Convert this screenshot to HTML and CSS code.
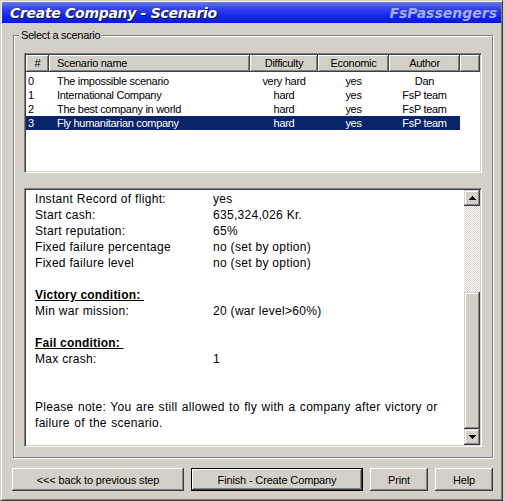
FILE: index.html
```html
<!DOCTYPE html>
<html>
<head>
<meta charset="utf-8">
<link rel="stylesheet" href="styles.css">
</head>
<body>
<div class="window">
  <div class="titlebar">
    <span class="title">Create Company - Scenario</span>
    <span class="brand">FsPassengers</span>
  </div>
  <div class="group">
    <span class="group-label">Select a scenario</span>
    <div class="list">
      <div class="list-header">
        <div class="hcell center">#</div>
        <div class="hcell name">Scenario name</div>
        <div class="hcell center">Difficulty</div>
        <div class="hcell center">Economic</div>
        <div class="hcell center">Author</div>
        <div class="hcell"></div>
      </div>
      <div class="rows">
        <div class="row"><span class="num">0</span><span class="name">The impossible scenario</span><span class="center">very hard</span><span class="center">yes</span><span class="center">Dan</span></div>
        <div class="row"><span class="num">1</span><span class="name">International Company</span><span class="center">hard</span><span class="center">yes</span><span class="center">FsP team</span></div>
        <div class="row"><span class="num">2</span><span class="name">The best company in world</span><span class="center">hard</span><span class="center">yes</span><span class="center">FsP team</span></div>
        <div class="row selected"><span class="num">3</span><span class="name">Fly humanitarian company</span><span class="center">hard</span><span class="center">yes</span><span class="center">FsP team</span></div>
      </div>
    </div>
    <div class="details">
      <div class="details-text">
        <div class="line"><span class="key">Instant Record of flight:</span><span>yes</span></div>
        <div class="line"><span class="key">Start cash:</span><span>635,324,026 Kr.</span></div>
        <div class="line"><span class="key">Start reputation:</span><span>65%</span></div>
        <div class="line"><span class="key">Fixed failure percentage</span><span>no (set by option)</span></div>
        <div class="line"><span class="key">Fixed failure level</span><span>no (set by option)</span></div>
        <div class="line"></div>
        <div class="line"><span class="heading">Victory condition:&nbsp;</span></div>
        <div class="line"><span class="key">Min war mission:</span><span>20 (war level&gt;60%)</span></div>
        <div class="line"></div>
        <div class="line"><span class="heading">Fail condition:&nbsp;</span></div>
        <div class="line"><span class="key">Max crash:</span><span>1</span></div>
        <div class="line"></div>
        <div class="line"></div>
        <div class="line note">Please note: You are still allowed to fly with a company after victory or</div>
        <div class="line note">failure of the scenario.</div>
      </div>
      <div class="scrollbar">
        <div class="sb-btn"><svg width="7" height="4" viewBox="0 0 7 4"><path d="M3 0h1v1h-1z M2 1h3v1h-3z M1 2h5v1h-5z M0 3h7v1h-7z" fill="#000"/></svg></div>
        <div class="sb-track"></div>
        <div class="sb-thumb"></div>
        <div class="sb-btn"><svg width="7" height="4" viewBox="0 0 7 4"><path d="M0 0h7v1h-7z M1 1h5v1h-5z M2 2h3v1h-3z M3 3h1v1h-1z" fill="#000"/></svg></div>
      </div>
    </div>
  </div>
  <div class="buttons">
    <div class="btn wide">&lt;&lt;&lt; back to previous step</div>
    <div class="btn wide default">Finish - Create Company</div>
    <div class="btn small">Print</div>
    <div class="btn small">Help</div>
  </div>
</div>
</body>
</html>
```
FILE: styles.css
```css
html, body {
  margin: 0;
  padding: 0;
  background: #d4d0c8;
}
body {
  width: 505px;
  height: 501px;
  overflow: hidden;
  font-family: "Liberation Sans", Arial, sans-serif;
  color: #000;
}
.window {
  width: 503px;
  height: 501px;
  box-sizing: border-box;
  border: 1px solid;
  border-color: #d4d0c8 #404040 #404040 #d4d0c8;
  box-shadow: inset 1px 1px 0 #fff, inset -1px -1px 0 #808080;
  padding: 1px;
  background: #d4d0c8;
}
.titlebar {
  height: 21px;
  display: flex;
  align-items: center;
  justify-content: space-between;
  padding: 0 4px 0 8px;
  background: linear-gradient(180deg, #6c78e4 0%, #3040ee 35%, #1024ec 70%, #0818e0 100%);
  font-family: "DejaVu Sans", Verdana, sans-serif;
  font-weight: bold;
  font-style: italic;
}
.title {
  font-size: 14px;
  letter-spacing: -0.3px;
  color: #fff;
  text-shadow: 1px 1px 0 #101040;
}
.brand {
  font-size: 14px;
  color: #a4acec;
}
.group {
  position: relative;
  margin: 12px 0 0 11px;
  width: 480px;
  height: 423px;
  box-sizing: border-box;
  border: 1px solid #808080;
  box-shadow: inset 1px 1px 0 #fff, 1px 1px 0 #fff;
  padding: 17px 10px 10px 10px;
  display: flex;
  flex-direction: column;
  gap: 15px;
}
.group-label {
  position: absolute;
  top: -8px;
  left: 5px;
  padding: 0 2px;
  background: #d4d0c8;
  font-size: 11px;
  line-height: 14px;
  letter-spacing: -0.3px;
}
.list, .details {
  box-sizing: border-box;
  border: 1px solid;
  border-color: #808080 #fff #fff #808080;
  box-shadow: inset 1px 1px 0 #404040, inset -1px -1px 0 #d4d0c8;
  padding: 1px;
  background: #fff;
}
.list {
  height: 120px;
  font-size: 11px;
  letter-spacing: -0.3px;
}
.list-header {
  display: grid;
  grid-template-columns: 23px 201px 68px 71px 71px 20px;
  height: 17px;
}
.hcell {
  background: #d4d0c8;
  box-shadow: inset -1px -1px 0 #404040, inset 1px 1px 0 #fff, inset -2px -2px 0 #808080;
  line-height: 17px;
  white-space: nowrap;
}
.hcell.name {
  padding-left: 8px;
}
.center {
  text-align: center;
}
.rows {
  padding-top: 2px;
}
.row {
  display: grid;
  grid-template-columns: 23px 201px 68px 71px 71px;
  width: 434px;
  height: 14px;
  line-height: 14px;
  white-space: nowrap;
}
.row .num {
  padding-left: 2px;
}
.row .name {
  padding-left: 8px;
}
.row.selected {
  background: #0a246a;
  color: #fff;
}
.details {
  height: 259px;
  display: flex;
}
.details-text {
  flex: 1;
  padding: 1px 0 0 9px;
  font-size: 12px;
  line-height: 16px;
  letter-spacing: 0.3px;
}
.line {
  height: 16px;
  display: flex;
  white-space: nowrap;
}
.line.note {
  word-spacing: 0.8px;
}
.key {
  width: 178px;
  flex: none;
}
.heading {
  font-weight: bold;
  text-decoration: underline;
  letter-spacing: 0.2px;
}
.scrollbar {
  width: 16px;
  display: flex;
  flex-direction: column;
}
.sb-btn, .sb-thumb {
  background: #d4d0c8;
  box-shadow: inset -1px -1px 0 #404040, inset 1px 1px 0 #d4d0c8, inset -2px -2px 0 #808080, inset 2px 2px 0 #fff;
}
.sb-btn {
  height: 16px;
  display: flex;
  align-items: center;
  justify-content: center;
}
.sb-track {
  height: 86px;
  background-image: repeating-conic-gradient(#fff 0 25%, #d4d0c8 0 50%);
  background-size: 2px 2px;
}
.sb-thumb {
  height: 137px;
}
.buttons {
  display: flex;
  gap: 7px;
  margin: 10px 0 0 10px;
}
.btn {
  height: 23px;
  box-sizing: border-box;
  background: #d4d0c8;
  box-shadow: inset -1px -1px 0 #404040, inset 1px 1px 0 #fff, inset -2px -2px 0 #808080;
  font-size: 11px;
  letter-spacing: -0.15px;
  display: flex;
  align-items: center;
  justify-content: center;
  white-space: nowrap;
}
.btn.wide {
  width: 172px;
}
.btn.small {
  width: 58px;
}
.btn.default {
  border: 1px solid #000;
}
```
